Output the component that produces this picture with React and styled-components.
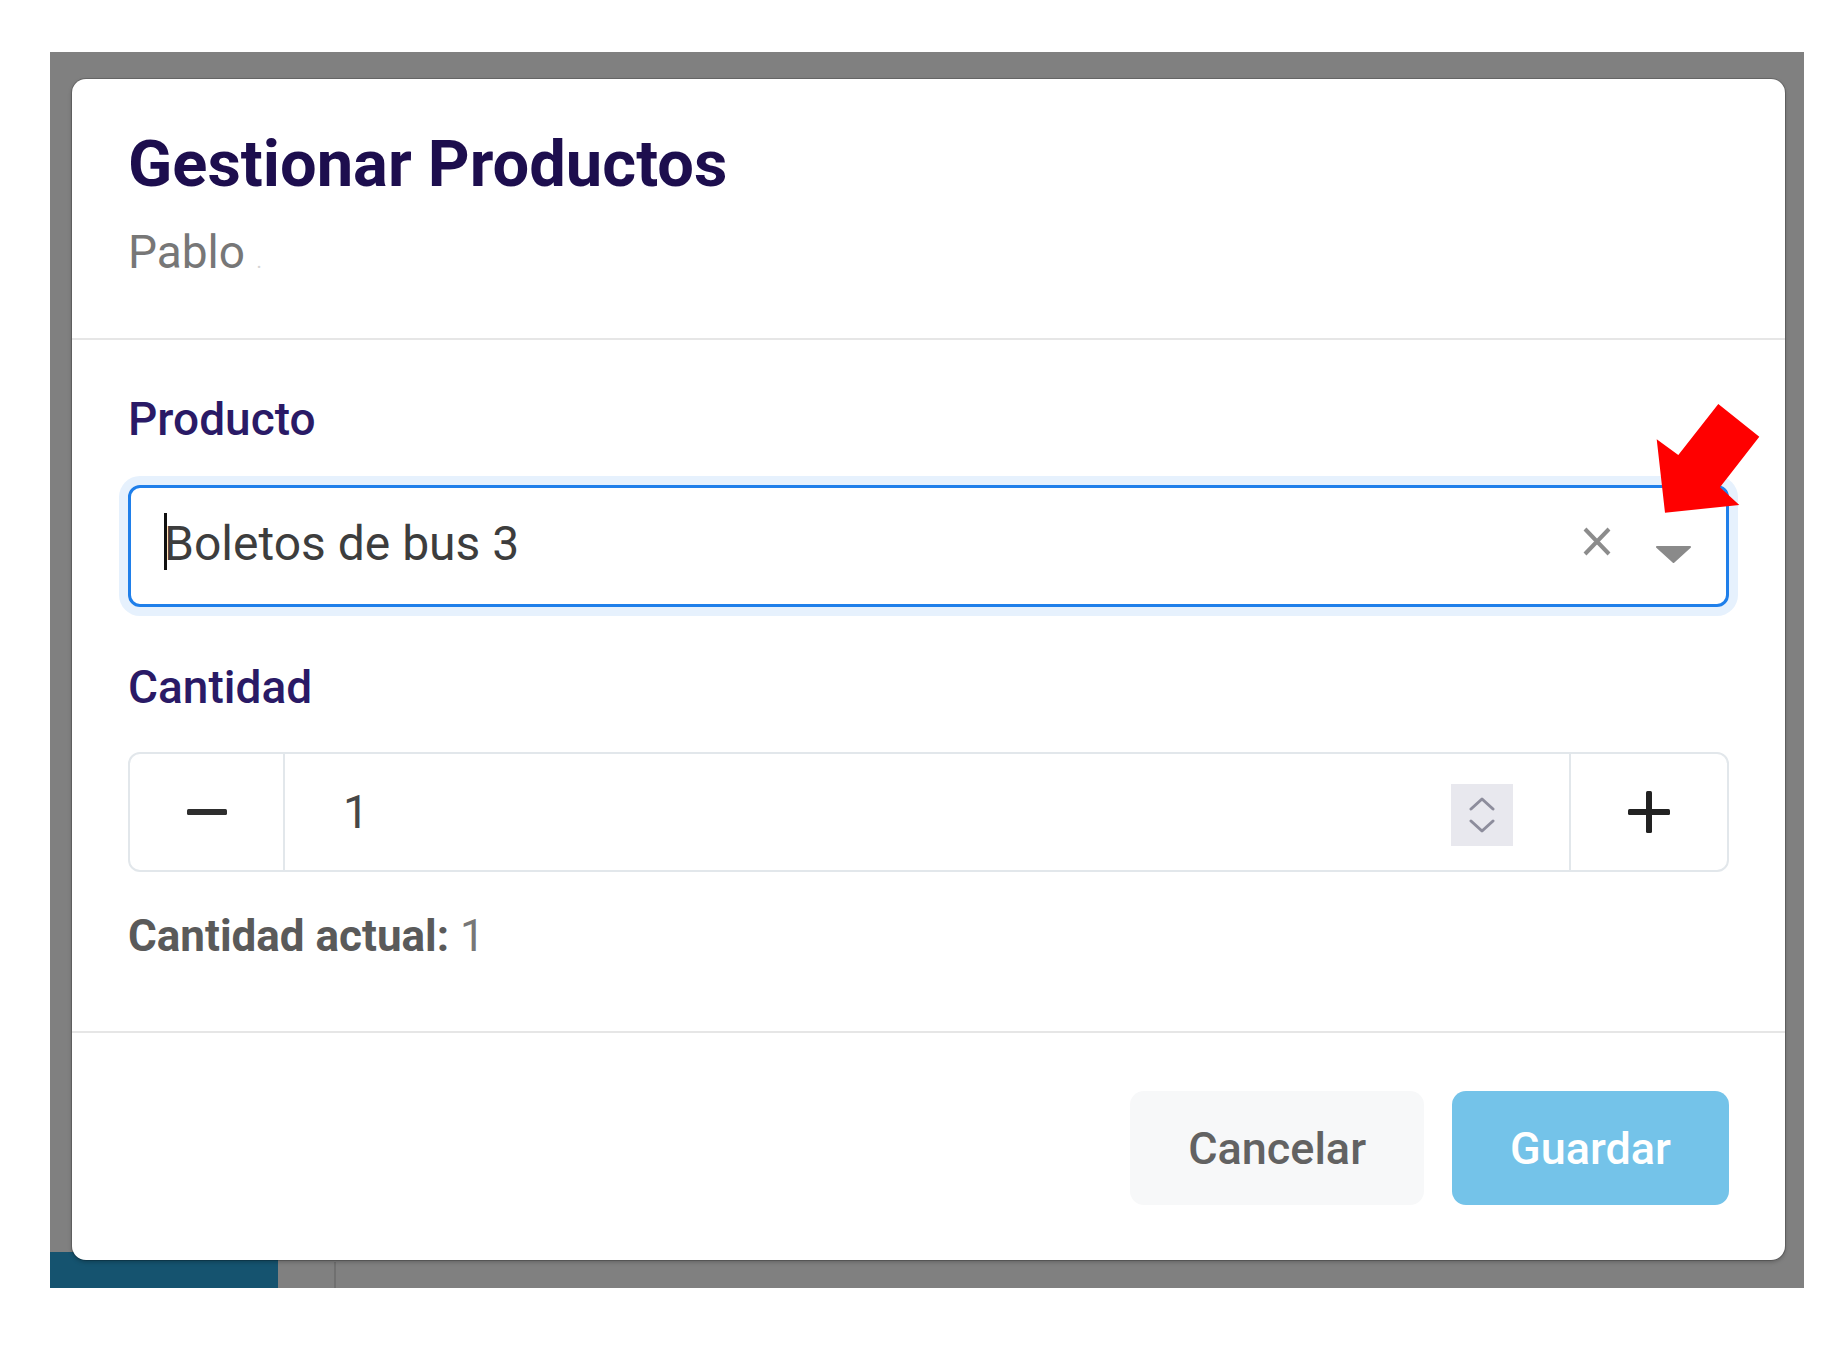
import React from 'react';
import styled, { createGlobalStyle } from 'styled-components';

const GlobalStyle = createGlobalStyle`
  html, body {
    margin: 0;
    padding: 0;
    background: #ffffff;
  }
  body {
    font-family: Roboto, "Noto Sans", "Liberation Sans", sans-serif;
  }
  * { box-sizing: border-box; }
`;

const Page = styled.div`
  position: relative;
  width: 1839px;
  height: 1348px;
  padding: 52px 35px 0 50px;
`;

const Backdrop = styled.div`
  position: relative;
  width: 1754px;
  height: 1236px;
  padding: 27px 19px 0 22px;
  background: #808080;
`;

// bits of the page that sit under the overlay
const SidebarTab = styled.div`
  position: absolute;
  left: 0;
  bottom: 0;
  width: 228px;
  height: 36px;
  background: #15536f;
`;

const ColumnEdge = styled.div`
  position: absolute;
  left: 284px;
  bottom: 0;
  width: 2px;
  height: 26px;
  background: #707070;
`;

const Dialog = styled.div`
  position: relative;
  z-index: 1;
  display: flex;
  flex-direction: column;
  background: #ffffff;
  border-radius: 14px;
  box-shadow: 0 0 0 1px rgba(0, 0, 0, 0.18), 0 2px 4px rgba(0, 0, 0, 0.25);
`;

const Header = styled.header`
  display: flex;
  flex-direction: column;
  gap: 22px;
  padding: 47px 56px 49px;
  border-bottom: 2px solid #e6e6e6;
`;

const Title = styled.h2`
  margin: 0;
  font-size: 65px;
  line-height: 76.8px;
  font-weight: 700;
  color: #1d0e4e;
`;

const Subtitle = styled.div`
  font-size: 46px;
  line-height: 55.2px;
  color: #777777;
`;

const Faint = styled.span`
  color: #d4d4d4;
  font-size: 20px;
`;

const Body = styled.div`
  display: flex;
  flex-direction: column;
  padding: 52px 56px 68px;
`;

const Label = styled.div`
  font-size: 46px;
  line-height: 55.2px;
  font-weight: 500;
  color: #2a1a66;
  margin-bottom: ${(p) => p.gap}px;
`;

const SelectBox = styled.div`
  display: flex;
  align-items: center;
  height: 122px;
  padding: 0 35px 6px 33px;
  margin-bottom: 53px;
  border: 3px solid #1f7fea;
  border-radius: 12px;
  box-shadow: 0 0 0 9px #e6f1fd;
  font-size: 48px;
  color: #3d3d3d;
`;

const Caret = styled.span`
  display: inline-block;
  width: 3px;
  height: 57px;
  margin-right: -3px;
  background: #111111;
  transform: translateY(-2px);
`;

const SelectValue = styled.span`
  flex: 1;
  white-space: nowrap;
`;

const IconRow = styled.div`
  display: flex;
  align-items: center;
  gap: 45px;
`;

const Stepper = styled.div`
  display: grid;
  grid-template-columns: 155px 1fr 158px;
  height: 120px;
  margin-bottom: 38px;
  border: 2px solid #e2e7eb;
  border-radius: 12px;
`;

const StepButton = styled.button`
  display: flex;
  align-items: center;
  justify-content: center;
  padding: 0;
  border: 0;
  background: transparent;
  border-left: ${(p) => (p.side === 'right' ? '2px solid #e2e7eb' : '0')};
  border-right: ${(p) => (p.side === 'left' ? '2px solid #e2e7eb' : '0')};
  cursor: pointer;
`;

const QtyField = styled.div`
  display: flex;
  align-items: center;
  padding: 0 56px 0 58px;
  font-size: 46px;
  color: #474747;
`;

const QtyValue = styled.span`
  flex: 1;
`;

const Spinner = styled.div`
  display: flex;
  flex-direction: column;
  align-items: center;
  justify-content: center;
  gap: 8px;
  width: 62px;
  height: 62px;
  margin-top: 6px;
  background: #e8e8ee;
`;

const Note = styled.div`
  font-size: 44px;
  line-height: 52.8px;
  color: #777777;
  b {
    font-weight: 700;
    color: #5a5a5a;
  }
`;

const Footer = styled.footer`
  display: flex;
  justify-content: flex-end;
  gap: 28px;
  padding: 58px 56px 55px;
  border-top: 2px solid #e6e6e6;
`;

const Button = styled.button`
  height: 114px;
  padding: 0 58px;
  border: 0;
  border-radius: 14px;
  font-family: Roboto, "Noto Sans", sans-serif;
  font-size: 45px;
  font-weight: 500;
  background: ${(p) => (p.primary ? '#74c3e9' : '#f7f8f9')};
  color: ${(p) => (p.primary ? '#ffffff' : '#626262')};
  cursor: pointer;
`;

const Annotation = styled.svg`
  position: absolute;
  left: 1650px;
  top: 400px;
  z-index: 5;
`;

const ClearIcon = () => (
  <svg width="28" height="40" viewBox="0 0 28 40">
    <path d="M2 6 L26 31 M26 6 L2 31" stroke="#8c8c8c" strokeWidth="4" fill="none" />
  </svg>
);

const CaretDown = () => (
  <svg width="35" height="40" viewBox="0 0 35 40">
    <polygon points="1,24 34,24 17.5,39" fill="#8a8a8a" stroke="#8a8a8a" strokeWidth="2" strokeLinejoin="round" />
  </svg>
);

const Minus = () => (
  <svg width="40" height="10" viewBox="0 0 40 10">
    <rect x="0" y="2" width="40" height="6" rx="1.5" fill="#2e2e2e" />
  </svg>
);

const Plus = () => (
  <svg width="42" height="42" viewBox="0 0 42 42">
    <rect x="0" y="18" width="42" height="6" rx="1.5" fill="#222222" />
    <rect x="18" y="0" width="6" height="42" rx="1.5" fill="#222222" />
  </svg>
);

const Chevron = ({ up }) => (
  <svg width="26" height="14" viewBox="0 0 26 14">
    <path
      d={up ? 'M2 12 L13 2 L24 12' : 'M2 2 L13 12 L24 2'}
      stroke="#8d8d9c"
      strokeWidth="3"
      fill="none"
      strokeLinecap="round"
      strokeLinejoin="round"
    />
  </svg>
);

const App = () => {
  const qty = 1;

  return (
    <>
      <GlobalStyle />
      <Page>
        <Backdrop>
          <SidebarTab />
          <ColumnEdge />
          <Dialog>
            <Header>
              <Title>Gestionar Productos</Title>
              <Subtitle>
                Pablo <Faint>.</Faint>
              </Subtitle>
            </Header>

            <Body>
              <Label gap={38}>Producto</Label>
              <SelectBox>
                <Caret />
                <SelectValue>Boletos de bus 3</SelectValue>
                <IconRow>
                  <ClearIcon />
                  <CaretDown />
                </IconRow>
              </SelectBox>

              <Label gap={37}>Cantidad</Label>
              <Stepper>
                <StepButton side="left" aria-label="restar">
                  <Minus />
                </StepButton>
                <QtyField>
                  <QtyValue>{qty}</QtyValue>
                  <Spinner>
                    <Chevron up />
                    <Chevron />
                  </Spinner>
                </QtyField>
                <StepButton side="right" aria-label="sumar">
                  <Plus />
                </StepButton>
              </Stepper>

              <Note>
                <b>Cantidad actual:</b> {qty}
              </Note>
            </Body>

            <Footer>
              <Button>Cancelar</Button>
              <Button primary>Guardar</Button>
            </Footer>
          </Dialog>
        </Backdrop>

        <Annotation width="115" height="118" viewBox="0 0 115 118">
          <polygon
            points="15,112.7 6.7,39.3 28.3,55 68.3,4 109.3,36.7 70,87.3 89.3,105"
            fill="#ff0000"
          />
        </Annotation>
      </Page>
    </>
  );
};

export default App;
